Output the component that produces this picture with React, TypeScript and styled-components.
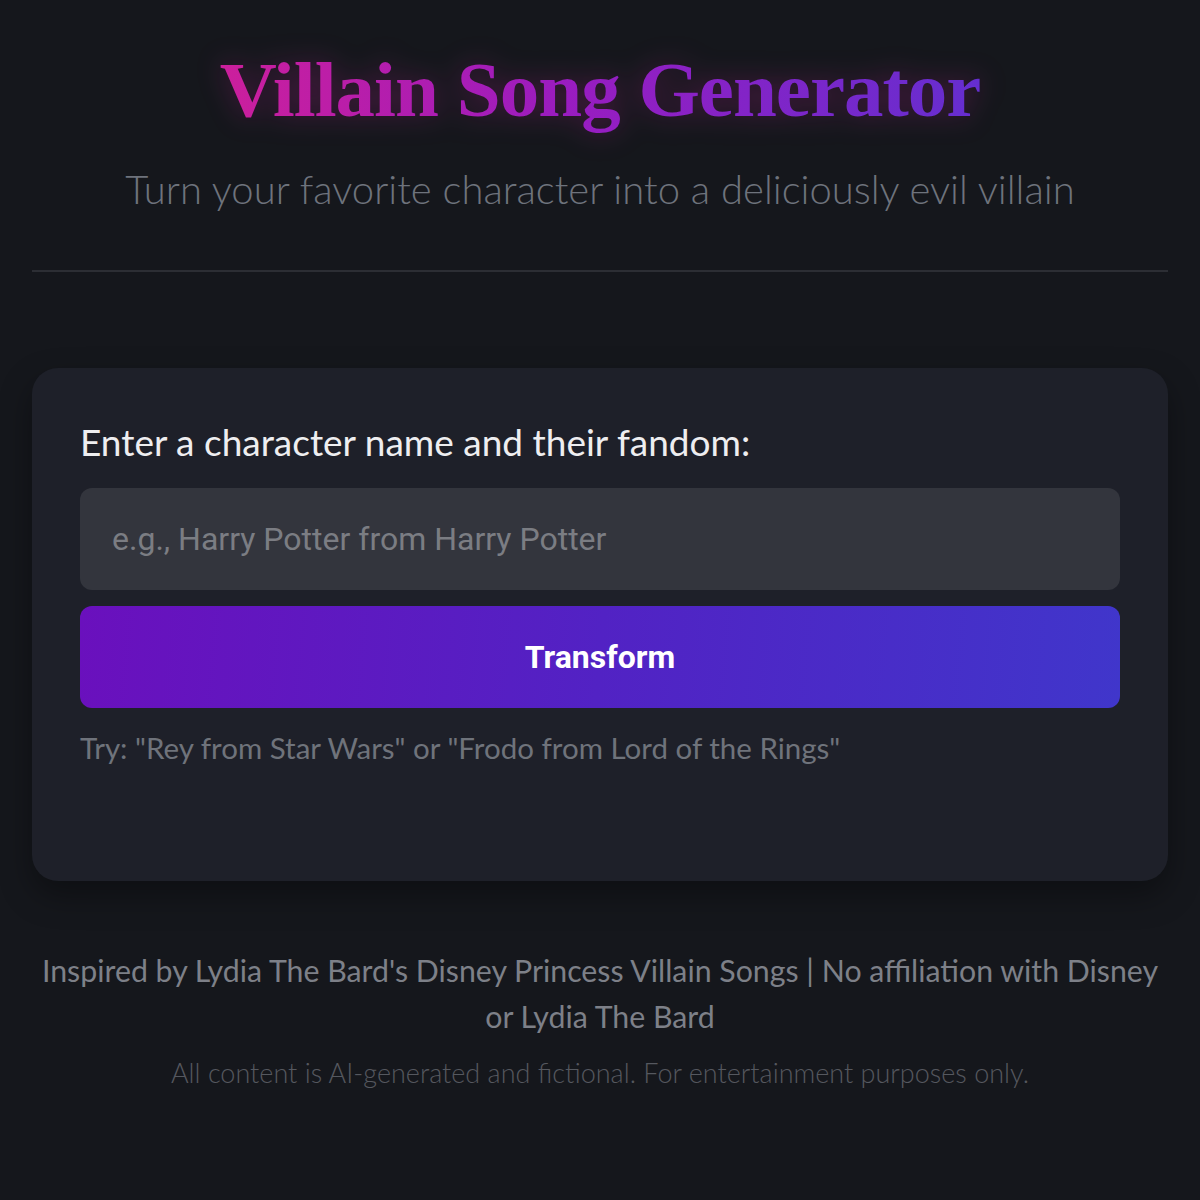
import React from "react";
import styled, { createGlobalStyle } from "styled-components";

const Global = createGlobalStyle`
  html, body {
    margin: 0;
    padding: 0;
    background: #15171c;
  }
  body {
    font-family: "Lato", "Open Sans", sans-serif;
    color: #e8e8ea;
  }
  * { box-sizing: border-box; }
`;

const Page = styled.div`
  min-height: 1200px;
  padding: 0 32px;
  background: #15171c;
`;

const Header = styled.header`
  display: flex;
  flex-direction: column;
  align-items: center;
  padding-top: 44px;
  padding-bottom: 55px;
  border-bottom: 2px solid #2c2e34;
`;

const Title = styled.h1`
  margin: 0;
  font-family: "Liberation Serif", "DejaVu Serif", serif;
  font-weight: 700;
  font-size: 79px;
  line-height: 92px;
  letter-spacing: -1px;
  background: linear-gradient(90deg, #cc1f9c 0%, #9a1cc0 45%, #652ed0 100%);
  -webkit-background-clip: text;
  background-clip: text;
  color: transparent;
  filter: drop-shadow(0 0 14px rgba(190, 30, 150, 0.35));
`;

const Subtitle = styled.p`
  margin: 0;
  margin-top: 27px;
  font-family: "Lato", sans-serif;
  font-weight: 300;
  font-size: 40px;
  line-height: 52px;
  color: #6e737c;
`;

const Card = styled.section`
  margin-top: 96px;
  background: #1e2029;
  border-radius: 26px;
  padding: 52px 48px 115px;
  box-shadow: 0 14px 32px rgba(0, 0, 0, 0.35);
  display: flex;
  flex-direction: column;
`;

const Label = styled.label`
  font-family: "Lato", sans-serif;
  font-weight: 400;
  font-size: 37px;
  line-height: 44px;
  color: #eeeef0;
  margin-bottom: 24px;
`;

const Input = styled.input`
  height: 102px;
  border: none;
  outline: none;
  border-radius: 12px;
  background: #33353d;
  padding: 0 32px;
  font-family: "Roboto", sans-serif;
  font-size: 32px;
  color: #e8e8ea;
  &::placeholder {
    font-family: "Roboto", sans-serif;
    color: #7b7d83;
  }
`;

const Button = styled.button`
  margin-top: 16px;
  height: 102px;
  border: none;
  border-radius: 12px;
  background: linear-gradient(95deg, #6a10bd 0%, #5222c4 50%, #4036cb 100%);
  color: #ffffff;
  font-family: "Roboto", sans-serif;
  font-weight: 700;
  font-size: 32px;
  cursor: pointer;
`;

const Hint = styled.p`
  margin: 22px 0 0;
  font-family: "Lato", sans-serif;
  font-weight: 400;
  font-size: 29.5px;
  line-height: 36px;
  color: #6f737b;
`;

const Footer = styled.footer`
  margin-top: 66px;
  display: flex;
  flex-direction: column;
  align-items: center;
  text-align: center;
`;

const Credit = styled.p`
  margin: 0;
  font-family: "Lato", sans-serif;
  font-weight: 400;
  font-size: 30.3px;
  line-height: 46px;
  color: #7d8088;
  max-width: 1120px;
`;

const Disclaimer = styled.p`
  margin: 17px 0 0;
  font-family: "Lato", sans-serif;
  font-weight: 300;
  font-size: 27px;
  line-height: 34px;
  color: #55585f;
`;

export default function App() {
  return (
    <>
      <Global />
      <Page>
        <Header>
          <Title>Villain Song Generator</Title>
          <Subtitle>Turn your favorite character into a deliciously evil villain</Subtitle>
        </Header>
        <Card>
          <Label htmlFor="character">Enter a character name and their fandom:</Label>
          <Input id="character" placeholder="e.g., Harry Potter from Harry Potter" />
          <Button>Transform</Button>
          <Hint>Try: "Rey from Star Wars" or "Frodo from Lord of the Rings"</Hint>
        </Card>
        <Footer>
          <Credit>
            Inspired by Lydia The Bard's Disney Princess Villain Songs | No affiliation with Disney or Lydia The Bard
          </Credit>
          <Disclaimer>All content is AI-generated and fictional. For entertainment purposes only.</Disclaimer>
        </Footer>
      </Page>
    </>
  );
}
